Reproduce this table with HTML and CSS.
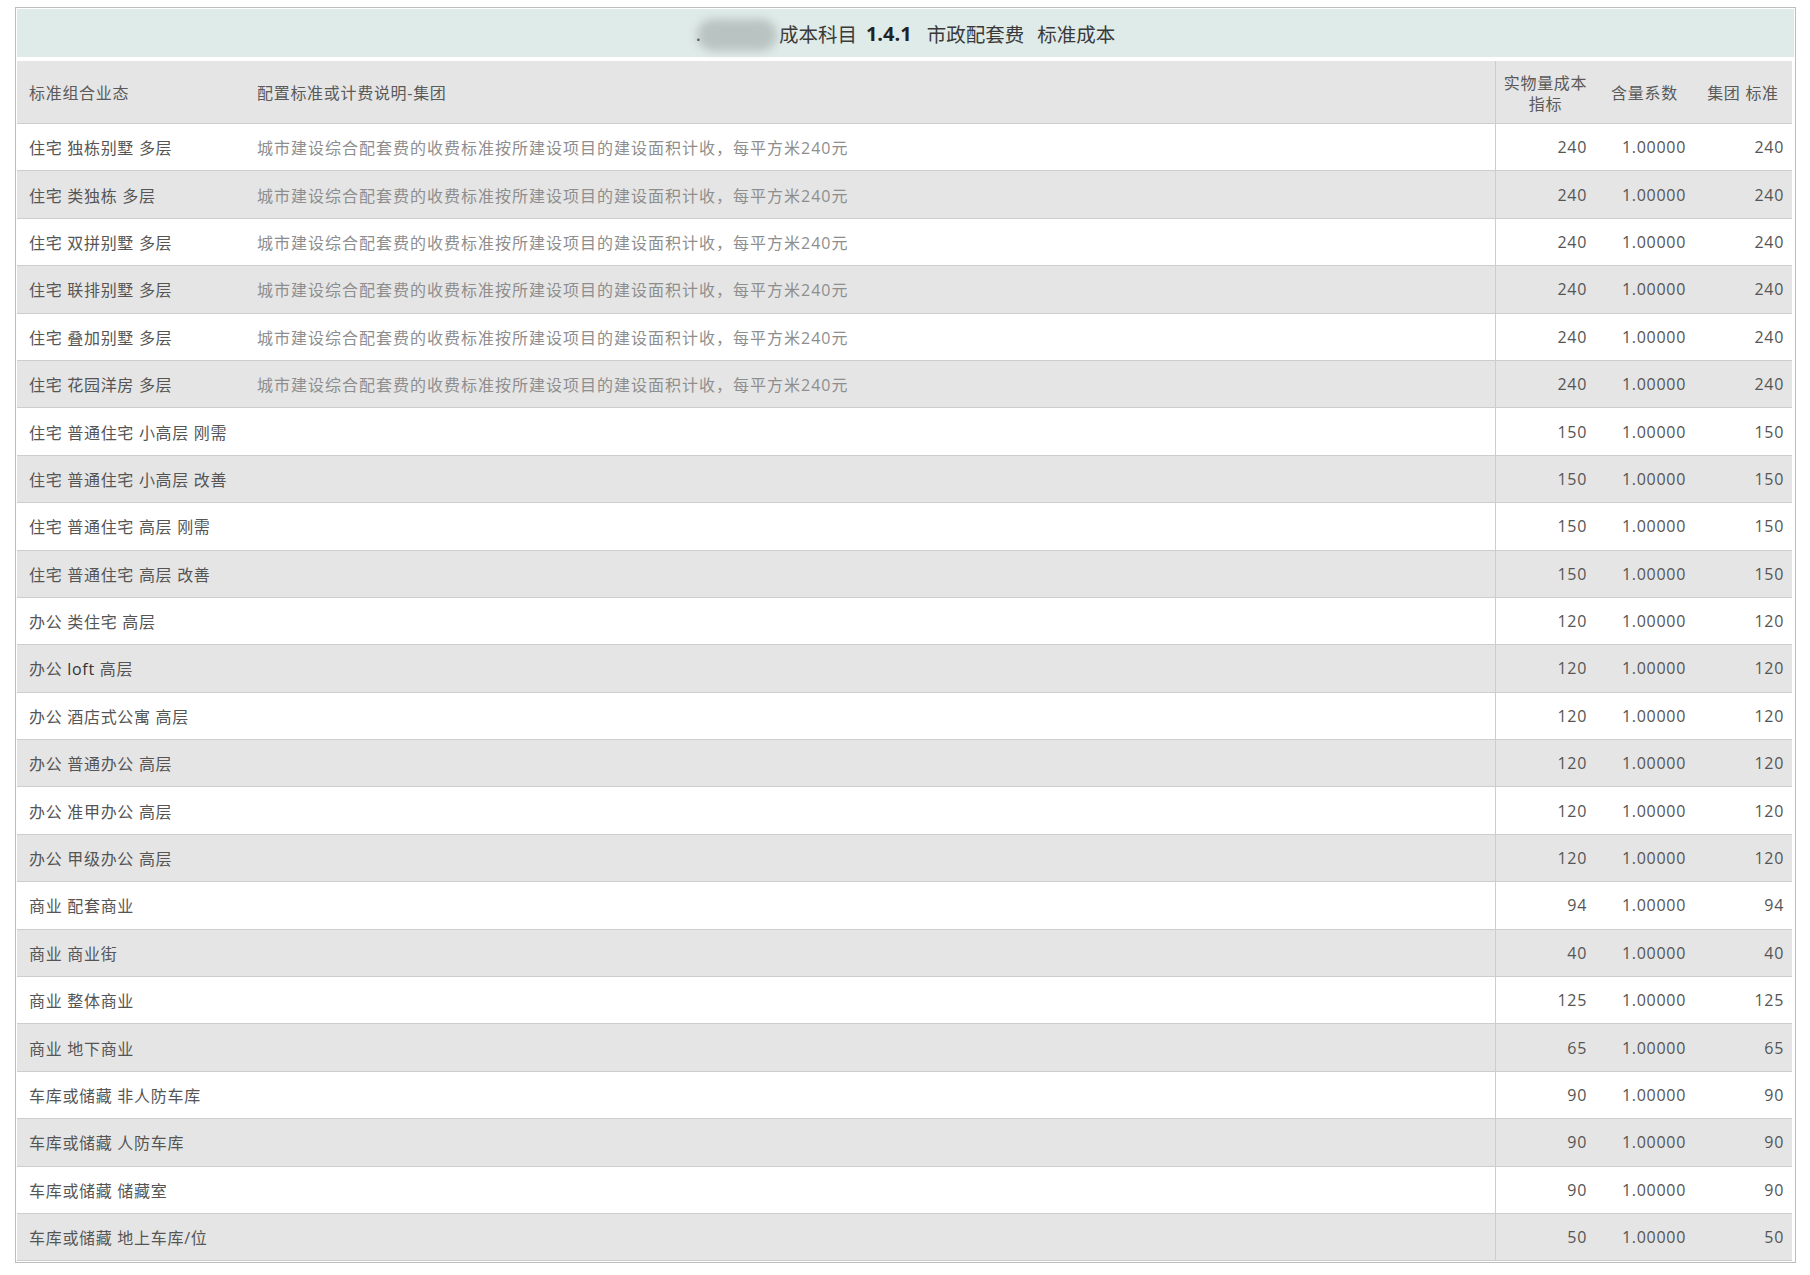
FILE: index.html
```html
<!DOCTYPE html>
<html lang="zh-CN">
<head>
<meta charset="utf-8">
<title>市政配套费 标准成本</title>
<link rel="stylesheet" href="styles.css">
</head>
<body>
<div class="panel">
  <div class="title-bar">
    <span class="dot">.</span><span class="masked"></span><span class="t-part first">成本科目</span><b class="code">1.4.1</b><span class="t-part">市政配套费</span><span class="t-part">标准成本</span>
  </div>
  <table class="cost-table">
    <colgroup>
      <col class="c-type"><col class="c-desc"><col class="c-num"><col class="c-coef"><col class="c-std">
    </colgroup>
    <thead>
      <tr>
        <th class="l">标准组合业态</th>
        <th class="l">配置标准或计费说明-集团</th>
        <th class="sep">实物量成本<br>指标</th>
        <th>含量系数</th>
        <th>集团 标准</th>
      </tr>
    </thead>
    <tbody>
      <tr><td>住宅 独栋别墅 多层</td><td class="desc">城市建设综合配套费的收费标准按所建设项目的建设面积计收，每平方米240元</td><td class="n sep">240</td><td class="n">1.00000</td><td class="n">240</td></tr>
      <tr><td>住宅 类独栋 多层</td><td class="desc">城市建设综合配套费的收费标准按所建设项目的建设面积计收，每平方米240元</td><td class="n sep">240</td><td class="n">1.00000</td><td class="n">240</td></tr>
      <tr><td>住宅 双拼别墅 多层</td><td class="desc">城市建设综合配套费的收费标准按所建设项目的建设面积计收，每平方米240元</td><td class="n sep">240</td><td class="n">1.00000</td><td class="n">240</td></tr>
      <tr><td>住宅 联排别墅 多层</td><td class="desc">城市建设综合配套费的收费标准按所建设项目的建设面积计收，每平方米240元</td><td class="n sep">240</td><td class="n">1.00000</td><td class="n">240</td></tr>
      <tr><td>住宅 叠加别墅 多层</td><td class="desc">城市建设综合配套费的收费标准按所建设项目的建设面积计收，每平方米240元</td><td class="n sep">240</td><td class="n">1.00000</td><td class="n">240</td></tr>
      <tr><td>住宅 花园洋房 多层</td><td class="desc">城市建设综合配套费的收费标准按所建设项目的建设面积计收，每平方米240元</td><td class="n sep">240</td><td class="n">1.00000</td><td class="n">240</td></tr>
      <tr><td>住宅 普通住宅 小高层 刚需</td><td class="desc"></td><td class="n sep">150</td><td class="n">1.00000</td><td class="n">150</td></tr>
      <tr><td>住宅 普通住宅 小高层 改善</td><td class="desc"></td><td class="n sep">150</td><td class="n">1.00000</td><td class="n">150</td></tr>
      <tr><td>住宅 普通住宅 高层 刚需</td><td class="desc"></td><td class="n sep">150</td><td class="n">1.00000</td><td class="n">150</td></tr>
      <tr><td>住宅 普通住宅 高层 改善</td><td class="desc"></td><td class="n sep">150</td><td class="n">1.00000</td><td class="n">150</td></tr>
      <tr><td>办公 类住宅 高层</td><td class="desc"></td><td class="n sep">120</td><td class="n">1.00000</td><td class="n">120</td></tr>
      <tr><td>办公 <span class="latin">loft</span> 高层</td><td class="desc"></td><td class="n sep">120</td><td class="n">1.00000</td><td class="n">120</td></tr>
      <tr><td>办公 酒店式公寓 高层</td><td class="desc"></td><td class="n sep">120</td><td class="n">1.00000</td><td class="n">120</td></tr>
      <tr><td>办公 普通办公 高层</td><td class="desc"></td><td class="n sep">120</td><td class="n">1.00000</td><td class="n">120</td></tr>
      <tr><td>办公 准甲办公 高层</td><td class="desc"></td><td class="n sep">120</td><td class="n">1.00000</td><td class="n">120</td></tr>
      <tr><td>办公 甲级办公 高层</td><td class="desc"></td><td class="n sep">120</td><td class="n">1.00000</td><td class="n">120</td></tr>
      <tr><td>商业 配套商业</td><td class="desc"></td><td class="n sep">94</td><td class="n">1.00000</td><td class="n">94</td></tr>
      <tr><td>商业 商业街</td><td class="desc"></td><td class="n sep">40</td><td class="n">1.00000</td><td class="n">40</td></tr>
      <tr><td>商业 整体商业</td><td class="desc"></td><td class="n sep">125</td><td class="n">1.00000</td><td class="n">125</td></tr>
      <tr><td>商业 地下商业</td><td class="desc"></td><td class="n sep">65</td><td class="n">1.00000</td><td class="n">65</td></tr>
      <tr><td>车库或储藏 非人防车库</td><td class="desc"></td><td class="n sep">90</td><td class="n">1.00000</td><td class="n">90</td></tr>
      <tr><td>车库或储藏 人防车库</td><td class="desc"></td><td class="n sep">90</td><td class="n">1.00000</td><td class="n">90</td></tr>
      <tr><td>车库或储藏 储藏室</td><td class="desc"></td><td class="n sep">90</td><td class="n">1.00000</td><td class="n">90</td></tr>
      <tr><td>车库或储藏 地上车库/位</td><td class="desc"></td><td class="n sep">50</td><td class="n">1.00000</td><td class="n">50</td></tr>
    </tbody>
  </table>
</div>
</body>
</html>
```

FILE: styles.css
```css
html, body {
  margin: 0;
  padding: 0;
  background: #ffffff;
}

body {
  font-family: "Open Sans", "Noto Sans CJK SC", sans-serif;
  font-size: 16px;
  color: #555555;
}

.panel {
  margin: 7px 0 0 15px;
  width: 1777px;
  border: 1px solid #bdbdbd;
  padding: 1px;
}

.title-bar {
  height: 48px;
  background: #dfebe9;
  display: flex;
  align-items: center;
  justify-content: center;
  font-size: 19.5px;
  color: #3a3a3a;
}

.title-bar .dot {
  color: #555;
  margin-right: -4px;
  position: relative;
  z-index: 1;
}

.title-bar .masked {
  display: inline-block;
  width: 80px;
  height: 32px;
  margin-top: 4px;
  background: #b9c3c1;
  border-radius: 16px;
  filter: blur(5px);
}

.title-bar .t-part {
  margin-right: 13px;
}

.title-bar .t-part.first {
  margin-left: 2px;
  margin-right: 9px;
}

.title-bar .t-part:last-child {
  margin-right: 0;
}

.title-bar .code {
  font-weight: 700;
  color: #222222;
  font-size: 20px;
  margin-right: 15px;
}

.cost-table {
  margin-top: 4px;
  width: 1775px;
  border-collapse: separate;
  border-spacing: 0;
  table-layout: fixed;
  letter-spacing: 0.7px;
}

.c-type { width: 228px; }
.c-desc { width: 1250px; }
.c-num { width: 100px; }
.c-coef { width: 99px; }
.c-std { width: 98px; }

.cost-table th {
  background: #e5e5e5;
  font-weight: 400;
  color: #5a5a5a;
  height: 59px;
  padding: 3px 6px 0;
  line-height: 21px;
  text-align: center;
  border-bottom: 1px solid #cdcdcd;
}

.cost-table th.l {
  text-align: left;
  padding-left: 12px;
}

.cost-table td {
  height: 46.4px;
  padding: 0 8px 0 12px;
  border-bottom: 1px solid #cdcdcd;
  white-space: nowrap;
  color: #555555;
}

.cost-table tbody tr:nth-child(even) td {
  background: #e5e5e5;
}

.cost-table td.desc {
  color: #8e8e8e;
  letter-spacing: 1px;
}

.cost-table td.n {
  text-align: right;
  padding: 0 8px 0 4px;
  color: #555555;
}

.cost-table .sep {
  border-left: 1px solid #cdcdcd;
}

.latin {
  color: #333333;
}
```
